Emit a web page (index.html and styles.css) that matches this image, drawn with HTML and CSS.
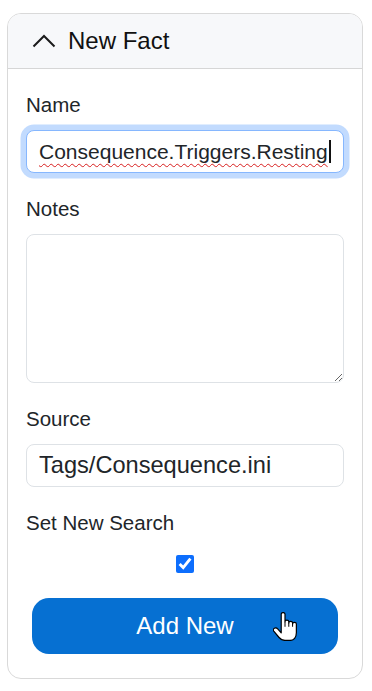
FILE: index.html
```html
<!DOCTYPE html>
<html lang="en">
<head>
<meta charset="utf-8">
<title>New Fact</title>
<link rel="stylesheet" href="styles.css">
</head>
<body>
<section class="card">
  <header class="card-header">
    <svg class="chevron" width="24" height="14" viewBox="0 0 24 14" aria-hidden="true">
      <polyline points="1.5,12.5 12,2 22.5,12.5" fill="none" stroke="#1b1b1b" stroke-width="2"/>
    </svg>
    <span class="title">New Fact</span>
  </header>
  <div class="card-body">
    <div class="group">
      <label class="label">Name</label>
      <div class="field field-focus"><span class="misspelled">Consequence.Triggers.Resting</span><span class="caret"></span></div>
    </div>
    <div class="group">
      <label class="label" for="notes">Notes</label>
      <textarea id="notes" class="field textarea"></textarea>
    </div>
    <div class="group">
      <label class="label" for="source">Source</label>
      <input id="source" class="field source" type="text" value="Tags/Consequence.ini">
    </div>
    <div class="group check-group">
      <label class="label" for="setsearch">Set New Search</label>
      <div class="check-row"><input id="setsearch" class="check" type="checkbox" checked></div>
    </div>
    <div class="btn-wrap">
      <button class="btn" type="button">Add New</button>
      <svg class="cursor" width="24" height="29" viewBox="2 0 19 26.5" preserveAspectRatio="none" aria-hidden="true">
        <path d="M8.5 2 A1.5 1.5 0 0 1 11.5 2 V9 A1.5 1.5 0 0 1 14.5 9 V10 A1.5 1.5 0 0 1 17.5 10 V11 A1.5 1.5 0 0 1 20.5 11 V19 C20.5 23 18.5 26 15.5 26 H11.5 C9.5 26 8 25 6.8 23.3 L2.6 17.4 C2 16.5 2.2 15.3 3.1 14.8 C4 14.3 5.1 14.6 5.7 15.4 L8.5 19 Z" fill="#fff" stroke="#000" stroke-width="1.2" vector-effect="non-scaling-stroke" stroke-linejoin="round"/>
        <path d="M11.5 9 V13.5 M14.5 10 V13.5 M17.5 11 V13.5" fill="none" stroke="#000" stroke-width="1" vector-effect="non-scaling-stroke"/>
      </svg>
    </div>
  </div>
</section>
</body>
</html>
```

FILE: styles.css
```css
* { box-sizing: border-box; }

html, body {
  margin: 0;
  background: #ffffff;
}

body {
  padding: 13px 9px 0 7px;
  font-family: "Liberation Sans", Arial, sans-serif;
  color: #212529;
}

.card {
  width: 356px;
  border: 1px solid #d9d9d9;
  border-radius: 14px;
  overflow: hidden;
  background: #fff;
}

.card-header {
  height: 55px;
  display: flex;
  align-items: center;
  gap: 12px;
  padding-left: 24px;
  background: #f7f8fa;
  border-bottom: 1px solid #d6d6d6;
}

.chevron { display: block; flex: none; }

.title {
  font-size: 24px;
  line-height: 28px;
  color: #111;
}

.card-body {
  padding: 24px 18px 24px 18px;
  display: flex;
  flex-direction: column;
}

.group {
  display: flex;
  flex-direction: column;
  margin-bottom: 24px;
}

.label {
  font-size: 20.5px;
  line-height: 24px;
  margin-bottom: 13px;
  color: #212529;
}

.field {
  width: 100%;
  height: 43px;
  border: 1px solid #dee2e6;
  border-radius: 8px;
  background: #fff;
  padding: 0 12px;
  font-family: "Liberation Sans", Arial, sans-serif;
  color: #212529;
  margin: 0;
}

.field-focus {
  display: flex;
  align-items: center;
  border-color: #86b7fe;
  box-shadow: 0 0 0 5.5px #c2dbfe;
  font-size: 21px;
  line-height: 24px;
  white-space: nowrap;
  overflow: hidden;
}

.misspelled {
  text-decoration: underline wavy #d81e1e;
  text-decoration-thickness: 1px;
  text-decoration-skip-ink: none;
  text-underline-offset: 4px;
}

.caret {
  display: inline-block;
  width: 2px;
  height: 23px;
  background: #111;
  vertical-align: -4px;
  margin-left: 1px;
}

.textarea {
  height: 149px;
  resize: vertical;
  padding: 10px 12px;
  font-size: 20px;
  display: block;
}

.source {
  font-size: 23.6px;
  outline: none;
}

.check-group { margin-bottom: 25px; }

.check-group .label { margin-bottom: 20px; }

.check-row {
  display: flex;
  justify-content: center;
  height: 18px;
}

.check {
  width: 18px;
  height: 18px;
  margin: 0;
  accent-color: #0d6efd;
}

.btn-wrap {
  position: relative;
  padding: 0 6px;
}

.btn {
  display: block;
  width: 100%;
  height: 56px;
  border: none;
  border-radius: 17px;
  background: #0670d2;
  color: #fff;
  font-family: "Liberation Sans", Arial, sans-serif;
  font-size: 24px;
  padding: 0;
  margin: 0;
}

.cursor {
  position: absolute;
  left: 247px;
  top: 14px;
}
```
